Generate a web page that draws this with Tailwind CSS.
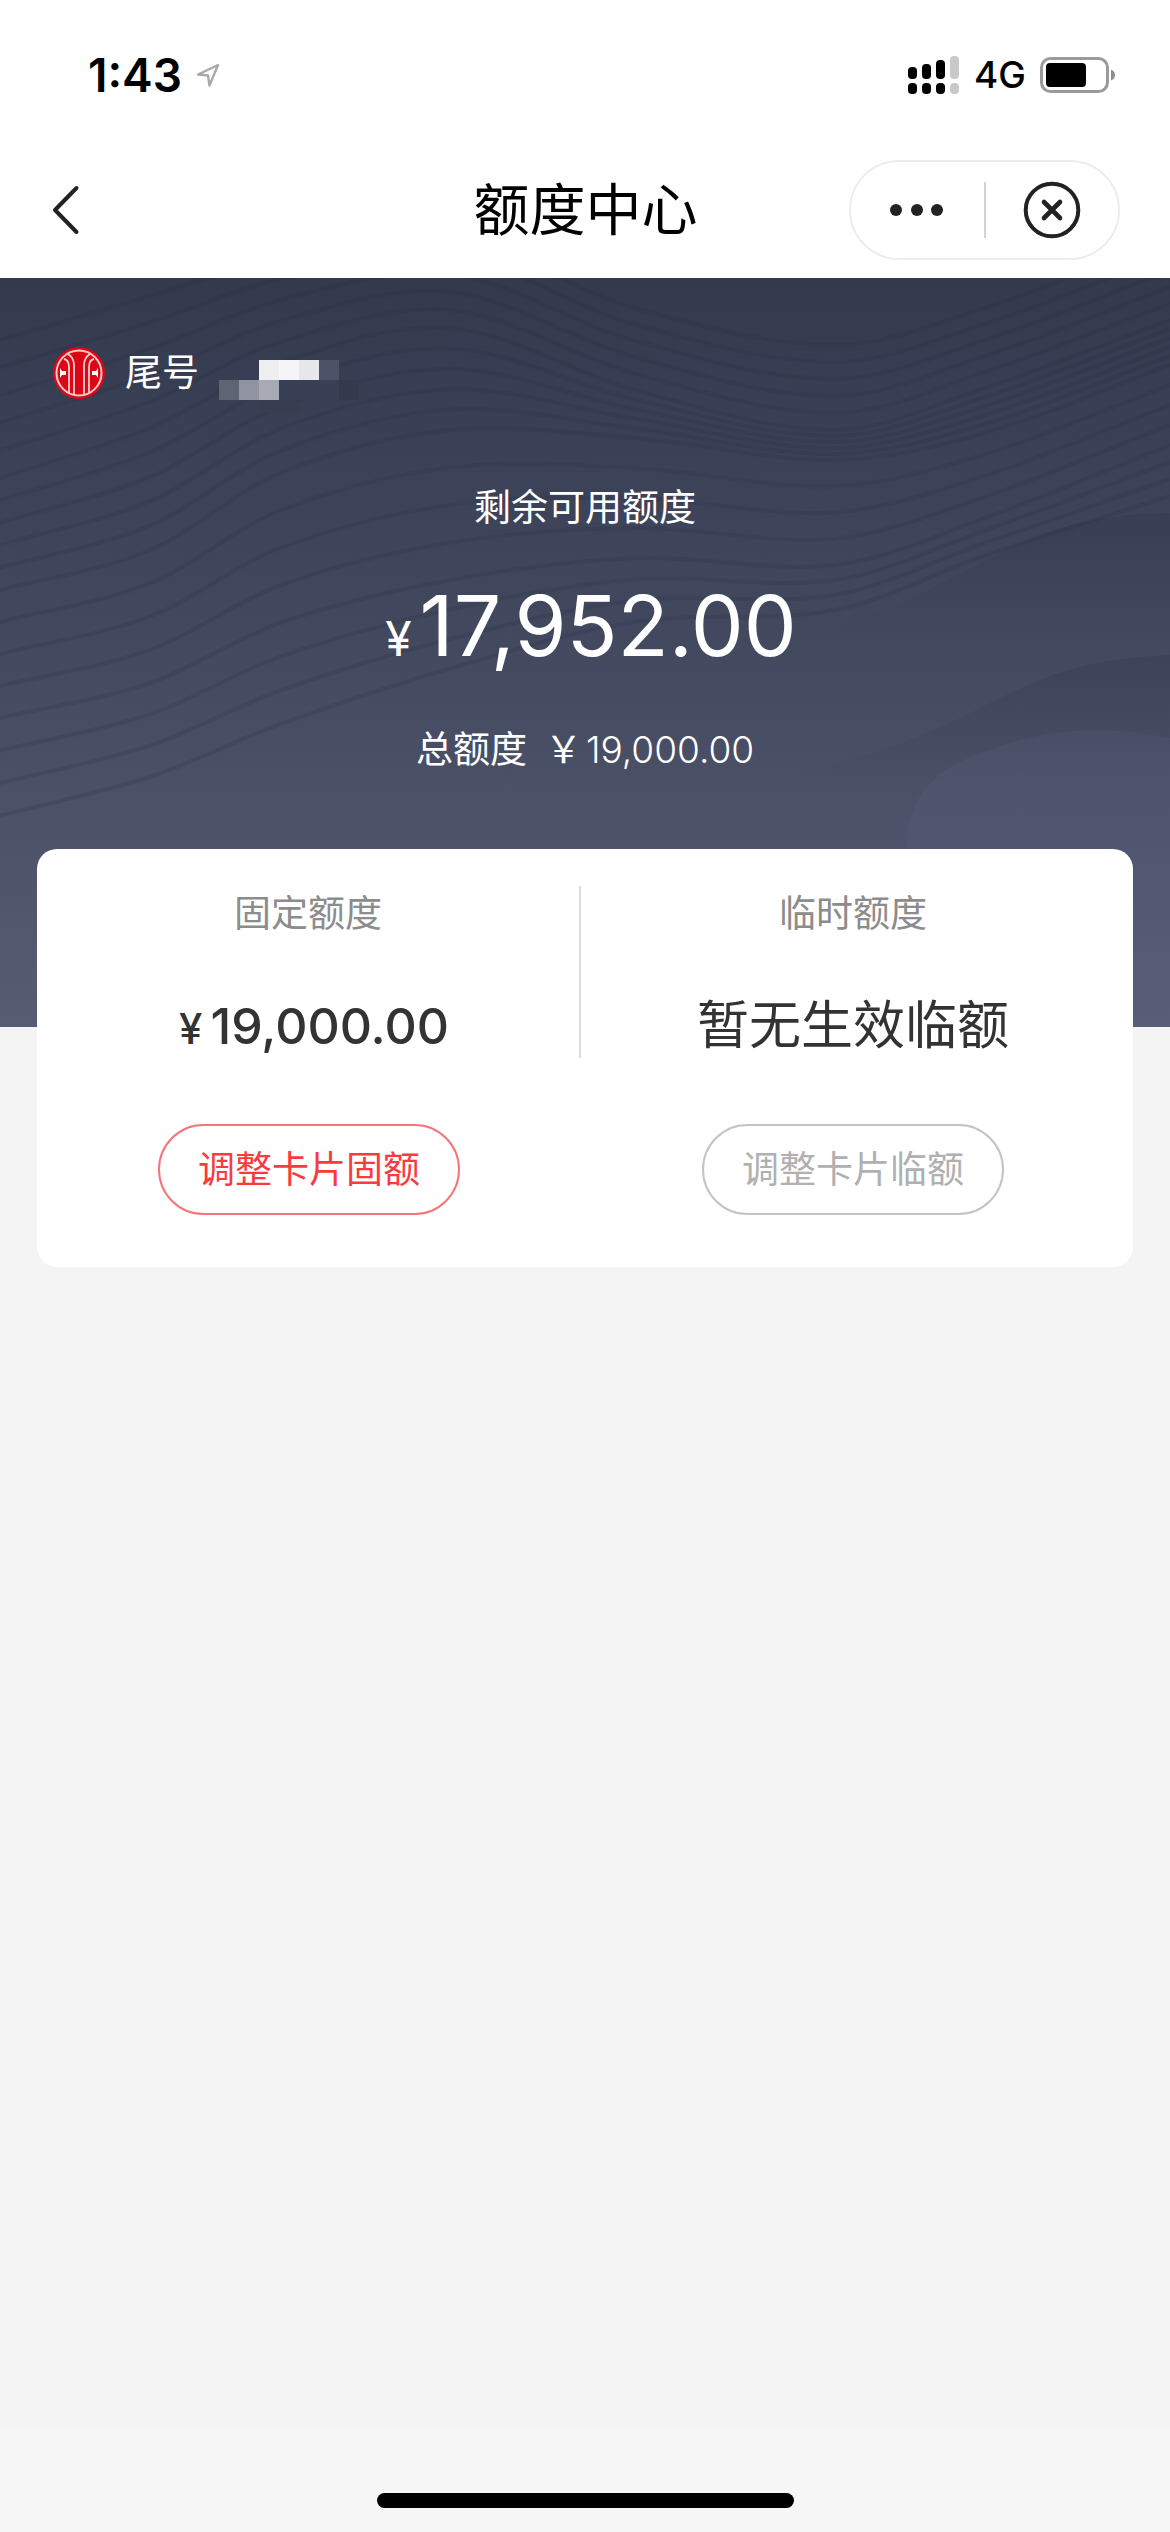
<!DOCTYPE html>
<html lang="zh-Hans">
<head>
    <meta charset="UTF-8">
    <meta name="viewport" content="width=device-width, initial-scale=1.0">
    <title>额度中心</title>
    <script src="https://cdn.jsdelivr.net/npm/@tailwindcss/browser@4"></script>
</head>
<body class="bg-[#f4f4f4] font-['Inter','Noto_Sans_CJK_SC',sans-serif] flex flex-col min-h-screen">
    <!-- 状态栏 -->
    <div class="bg-white flex items-center justify-between h-[150px] pl-[88px] pr-[54px]">
        <div class="flex items-center gap-[14px]">
            <span class="text-[46px] leading-[56px] font-semibold text-black">1:43</span>
            <svg class="w-[24px] h-[24px]" viewBox="0 0 24 24" fill="none" stroke="#a9a9a9" stroke-width="2.4" stroke-linejoin="round">
                <path d="M22 2L2 11.5L12 12.5L13.5 22.5Z"/>
            </svg>
        </div>
        <div class="flex items-center gap-[14px]">
            <svg class="w-[52px] h-[38px]" viewBox="0 0 52 38">
                <rect x="0" y="11" width="9" height="12" rx="4"/>
                <rect x="14" y="8" width="9" height="15" rx="4"/>
                <rect x="28" y="4" width="9" height="19" rx="4"/>
                <rect x="42" y="0" width="9" height="23" rx="4" fill="#c9c9c9"/>
                <rect x="0" y="27" width="9" height="11" rx="4"/>
                <rect x="14" y="27" width="9" height="11" rx="4"/>
                <rect x="28" y="27" width="9" height="11" rx="4"/>
                <rect x="42" y="27" width="9" height="11" rx="4" fill="#c9c9c9"/>
            </svg>
            <span class="text-[37px] leading-[56px] font-medium text-black">4G</span>
            <svg class="w-[76px] h-[36px]" viewBox="0 0 76 36">
                <rect x="1.5" y="1.5" width="66" height="33" rx="9" fill="none" stroke="#9b9b9b" stroke-width="3"/>
                <rect x="6" y="6" width="40" height="24" rx="4"/>
                <path d="M71 12.5Q75 14 75 18Q75 22 71 23.5Z" fill="#8d8d8d"/>
            </svg>
        </div>
    </div>

    <!-- 导航栏 -->
    <header class="bg-white grid grid-cols-3 items-center h-[128px] pb-2 pl-[51px] pr-[50px]">
        <button type="button" aria-label="返回" class="w-[48px]">
            <svg class="w-[30px] h-[50px]" viewBox="0 0 30 50" fill="none" stroke="#222" stroke-width="4" stroke-linecap="round" stroke-linejoin="round">
                <path d="M25.5 3L4 25L25.5 47"/>
            </svg>
        </button>
        <h1 class="text-[56px] leading-[80px] text-black text-center whitespace-nowrap">额度中心</h1>
        <div class="justify-self-end flex items-center w-[271px] h-[100px] border-2 border-[#ececec] rounded-full">
            <button type="button" aria-label="更多" class="flex-1 flex justify-center">
                <svg class="w-[54px] h-[12px]" viewBox="0 0 54 12" fill="#222">
                    <circle cx="6" cy="6" r="6"/>
                    <circle cx="27" cy="6" r="6"/>
                    <circle cx="47" cy="6" r="6"/>
                </svg>
            </button>
            <span class="w-[2px] h-[56px] bg-[#d2d2d2]"></span>
            <button type="button" aria-label="关闭" class="flex-1 flex justify-center">
                <svg class="w-[58px] h-[58px]" viewBox="0 0 58 58" fill="none" stroke="#222" stroke-width="4" stroke-linecap="round">
                    <circle cx="29" cy="29" r="26.3"/>
                    <path d="M21 21L37 37M37 21L21 37" stroke-width="4.6"/>
                </svg>
            </button>
        </div>
    </header>

    <main class="flex-1">
        <!-- 额度概览 -->
        <section class="relative overflow-hidden bg-linear-to-b from-[#333a4e] via-[#434a60] to-[#575c73] pt-[69px] pb-[249px] text-white">
            <svg class="absolute inset-0 w-full h-full" viewBox="0 0 1170 749" preserveAspectRatio="none" aria-hidden="true">
                <defs>
                    <linearGradient id="fold" x1="0" y1="0" x2="0" y2="1">
                        <stop offset="0" stop-color="#272b42" stop-opacity=".24"/>
                        <stop offset=".35" stop-color="#272b42" stop-opacity="0"/>
                    </linearGradient>
                </defs>
                <path fill="url(#fold)" d="M840 347C900 330 950 300 1010 270C1060 245 1110 236 1170 235V600H840Z"/>
                <path fill="url(#fold)" d="M650 545C760 505 880 480 960 440C1040 400 1070 382 1170 377V749H650Z"/>
                <path fill="#6a7090" fill-opacity=".12" d="M907 572C905 500 960 480 1010 465C1060 450 1110 448 1170 460V749H907Z"/>
                <g id="waves" fill="none" stroke="#262b41" stroke-opacity=".2" stroke-width="4"></g>
            </svg>

            <div class="relative flex items-center gap-5 h-[52px] pl-[53px]">
                <svg class="w-[52px] h-[52px]" viewBox="0 0 52 52" role="img" aria-label="银行标志">
                    <circle cx="26" cy="26" r="26" fill="#dc0716"/>
                    <circle cx="26" cy="26" r="22.5" fill="none" stroke="#f9cccc" stroke-width="2"/>
                    <g fill="none" stroke="#f9cccc" stroke-width="1.8">
                        <path d="M15 7Q21 11 21 18V48M11 12Q16 13 16 20V46"/>
                        <path d="M37 7Q31 11 31 18V48M41 12Q36 13 36 20V46"/>
                    </g>
                    <path d="M7 21V31L9 28H13V24H9ZM45 21V31L43 28H39V24H43Z" fill="#fff"/>
                </svg>
                <span class="text-[37px] leading-[52px]">尾号</span>
                <svg class="w-[160px] h-[80px]" viewBox="0 0 160 80" shape-rendering="crispEdges" aria-hidden="true">
                    <path d="M20 27h20v20h-20z" fill="#393e54"/>
                    <path d="M40 27h20v20h-20z" fill="#efeff0"/>
                    <path d="M60 27h20v20h-20z" fill="#f5f5f7"/>
                    <path d="M80 27h20v20h-20z" fill="#e5e7e9"/>
                    <path d="M100 27h20v20h-20z" fill="#4d5267"/>
                    <path d="M0 47h20v20h-20z" fill="#5f6475"/>
                    <path d="M20 47h20v20h-20z" fill="#9093a0"/>
                    <path d="M40 47h20v20h-20z" fill="#a7aab4"/>
                    <path d="M60 47h60v20h-60z" fill="#393f54"/>
                    <path d="M120 47h20v20h-20z" fill="#35394e"/>
                    <path d="M40 67h40v13h-40z" fill="#383d52"/>
                </svg>
            </div>

            <div class="relative flex flex-col items-center mt-[81px]">
                <p class="text-[37px] leading-[56px]">剩余可用额度</p>
                <p class="flex items-baseline gap-2 h-[96px] mt-[42px] pl-3 leading-[96px]">
                    <span class="text-[48px]">¥</span>
                    <span class="text-[84px]">17,952.00</span>
                </p>
                <p class="flex items-baseline gap-1 h-[56px] mt-[48px] text-[37px] leading-[56px]">
                    <span class="mr-[14px]">总额度</span>
                    <span>￥</span>
                    <span class="font-light">19,000.00</span>
                </p>
            </div>
        </section>

        <!-- 固定额度 / 临时额度 -->
        <section class="relative -mt-[178px] mx-[37px] bg-white rounded-[20px] grid grid-cols-2 pt-[37px] pb-[52px] pr-2">
            <div class="flex flex-col items-center">
                <div class="w-full flex flex-col items-center border-r-2 border-[#dcdcdc]">
                    <h2 class="text-[37px] leading-[56px] text-[#8c8c8c]">固定额度</h2>
                    <p class="flex items-baseline gap-2 h-[64px] mt-[52px] pl-3 leading-[64px] font-medium text-[#333]">
                        <span class="text-[42px]">¥</span>
                        <span class="text-[50px]">19,000.00</span>
                    </p>
                </div>
                <button type="button" class="mt-[66px] h-[91px] px-[38px] rounded-full border-2 border-[#f4767b] text-[37px] text-[#fb3a3f]">调整卡片固额</button>
            </div>
            <div class="flex flex-col items-center">
                <div class="w-full flex flex-col items-center">
                    <h2 class="text-[37px] leading-[56px] text-[#8c8c8c]">临时额度</h2>
                    <p class="h-[64px] mt-[52px] text-[52px] leading-[64px] text-[#333]">暂无生效临额</p>
                </div>
                <button type="button" disabled class="mt-[66px] h-[91px] px-[38px] rounded-full border-2 border-[#c4c4c4] text-[37px] text-[#b0b0b0]">调整卡片临额</button>
            </div>
        </section>
    </main>

    <footer class="bg-[#f6f6f6] flex justify-center items-end h-[104px] pb-6">
        <div class="w-[417px] h-[15px] bg-black rounded-full"></div>
    </footer>

    <script>
        // 背景波纹：在几条关键曲线之间插值
        const xs = [0, 150, 280, 450, 635, 835, 985, 1170];
        const keys = [
            [62, 18, -20, -40, 30, 67, 30, -40],
            [200, 150, 85, 50, 112, 152, 110, 42],
            [312, 272, 195, 152, 160, 182, 155, 87],
            [440, 405, 345, 302, 280, 287, 240, 167],
            [570, 530, 480, 420, 365, 347, 290, 235]
        ];
        const steps = [5, 5, 4, 4];

        function toPath(ys) {
            let d = `M${xs[0]} ${ys[0]}`;
            for (let i = 0; i < xs.length - 1; i++) {
                const dx = (xs[i + 1] - xs[i]) / 3;
                const slope = j => {
                    const a = Math.max(j - 1, 0);
                    const b = Math.min(j + 1, xs.length - 1);
                    return (ys[b] - ys[a]) / (xs[b] - xs[a]);
                };
                d += `C${xs[i] + dx} ${ys[i] + slope(i) * dx} ${xs[i + 1] - dx} ${ys[i + 1] - slope(i + 1) * dx} ${xs[i + 1]} ${ys[i + 1]}`;
            }
            return d;
        }

        const waves = document.getElementById('waves');
        steps.forEach((count, k) => {
            for (let n = 0; n < count; n++) {
                const t = n / count;
                const path = document.createElementNS('http://www.w3.org/2000/svg', 'path');
                path.setAttribute('d', toPath(keys[k].map((y, i) => y + (keys[k + 1][i] - y) * t)));
                waves.appendChild(path);
            }
        });
    </script>
</body>
</html>
